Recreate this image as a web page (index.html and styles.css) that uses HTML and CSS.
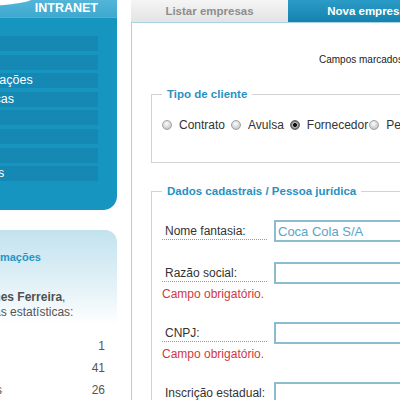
FILE: index.html
```html
<!DOCTYPE html>
<html lang="pt-BR">
<head>
<meta charset="utf-8">
<title>Nova empresa - Intranet</title>
<link rel="stylesheet" href="styles.css">
</head>
<body>
<div class="page">
  <aside class="side">
    <nav class="menu-panel">
      <div class="brand">INTRANET</div>
      <ul class="menu">
        <li>Início</li>
        <li>Agenda</li>
        <li>Comunicações</li>
        <li>Estatísticas</li>
        <li>Mural</li>
        <li>Notícias</li>
        <li>Perfil</li>
        <li>Contratos</li>
      </ul>
    </nav>
    <section class="info">
      <h3 class="info-title">Mais informações</h3>
      <p class="info-text">Olá, <b>Gomes Ferreira</b>,<br>observe as estatísticas:</p>
      <table class="stats">
        <tr><td>Logins</td><td class="num">1</td></tr>
        <tr><td>Avisos</td><td class="num">41</td></tr>
        <tr><td>Empresas</td><td class="num">26</td></tr>
      </table>
    </section>
  </aside>
  <main class="main">
    <div class="tabs">
      <a class="tab">Listar empresas</a>
      <a class="tab tab-active">Nova empresa</a>
    </div>
    <div class="box">
      <p class="note">Campos marcados com * são obrigatórios.</p>
      <fieldset class="group group-type">
        <legend>Tipo de cliente</legend>
        <div class="options">
          <label class="opt"><input type="radio" name="tipo">Contrato</label>
          <label class="opt"><input type="radio" name="tipo">Avulsa</label>
          <label class="opt"><input type="radio" name="tipo" checked>Fornecedor</label>
          <label class="opt opt-tight"><input type="radio" name="tipo">Pessoa física</label>
        </div>
      </fieldset>
      <fieldset class="group group-data">
        <legend>Dados cadastrais / Pessoa jurídica</legend>
        <div class="field">
          <div class="row"><span class="label">Nome fantasia:</span><input class="input" type="text" value="Coca Cola S/A"></div>
        </div>
        <div class="field">
          <div class="row"><span class="label">Razão social:</span><input class="input" type="text"></div>
          <div class="error">Campo obrigatório.</div>
        </div>
        <div class="field">
          <div class="row"><span class="label">CNPJ:</span><input class="input" type="text"></div>
          <div class="error">Campo obrigatório.</div>
        </div>
        <div class="field">
          <div class="row"><span class="label">Inscrição estadual:</span><input class="input" type="text"></div>
        </div>
      </fieldset>
    </div>
  </main>
</div>
</body>
</html>
```
FILE: styles.css
```css
html, body {
  margin: 0;
  padding: 0;
  overflow: hidden;
  background: #fff;
  font-family: "Liberation Sans", Arial, sans-serif;
}

.page {
  display: flex;
  align-items: flex-start;
  width: 780px;
  margin-left: -120px;
}

/* ---------- sidebar ---------- */
.side {
  width: 237px;
  flex: none;
}

.menu-panel {
  position: relative;
  overflow: hidden;
  height: 210px;
  background: #1795c1;
  border-bottom-right-radius: 14px;
}

.brand {
  height: 17px;
  line-height: 17px;
  padding-right: 19px;
  text-align: right;
  background: linear-gradient(#52b5d9, #3fa8cf);
  border-bottom: 1px solid #4db0d5;
  color: #fff;
  font-size: 12.5px;
  font-weight: bold;
}

.brand::before {
  content: "";
  position: absolute;
  left: 44px;
  top: -14px;
  width: 112px;
  height: 20px;
  border-radius: 50%;
  background: #fff;
}

.menu {
  list-style: none;
  margin: 18px 19px 0 0;
  padding: 0 0 0 40px;
}

.menu li {
  height: 15px;
  line-height: 15px;
  margin-bottom: 3.6px;
  padding-left: 30px;
  background: #1588b4;
  color: #fff;
  font-size: 12.5px;
  white-space: nowrap;
}

.info {
  margin-top: 20px;
  padding: 20px 12px 0 68px;
  height: 160px;
  background: linear-gradient(#c2e2ee, #e6f3f8 60px, #fff 95px);
  border-top-right-radius: 12px;
}

.info-title {
  margin: 0;
  font-size: 11px;
  line-height: 14px;
  font-weight: bold;
  color: #2596c6;
  white-space: nowrap;
}

.info-text {
  margin: 25.5px 0 0;
  font-size: 12px;
  line-height: 15px;
  color: #555;
  white-space: nowrap;
}

.info-text b {
  color: #505050;
}

.stats {
  width: 100%;
  margin-top: 15.5px;
  border-collapse: collapse;
  font-size: 12px;
  color: #555;
}

.stats td {
  height: 22px;
  padding: 0;
}

.stats .num {
  text-align: right;
}

/* ---------- main ---------- */
.main {
  width: 520px;
  flex: none;
  margin-left: 14px;
}

.tabs {
  display: flex;
}

.tab {
  width: 157px;
  height: 22px;
  line-height: 22px;
  text-align: center;
  font-size: 11.5px;
  font-weight: bold;
  color: #8e8e8e;
  background: linear-gradient(#f5f5f5, #e3e3e3);
}

.tab-active {
  color: #fff;
  background: linear-gradient(#2b9bc7, #1583ad);
}

.box {
  border: 1px solid #a9d3e2;
  padding: 31px 0 40px 19px;
}

.note {
  margin: 0 0 0 168px;
  font-size: 10px;
  line-height: 12px;
  color: #222;
  white-space: nowrap;
}

.group {
  margin: 21px 0 0;
  padding: 0 10px;
  border: 1px solid #d2d2d2;
}

.group legend {
  padding: 0 5px;
  font-size: 11.5px;
  line-height: 14px;
  font-weight: bold;
  color: #2a90c2;
}

.group-data {
  margin-top: 21px;
  padding-top: 22px;
}

.options {
  display: flex;
  align-items: center;
  padding: 15.5px 0 29.5px;
  font-size: 12px;
  line-height: 16px;
  color: #333;
  white-space: nowrap;
}

.opt {
  display: inline-flex;
  align-items: center;
  margin-right: 6px;
}

.opt-tight {
  margin-left: -5px;
}

.opt-tight input {
  margin-right: 2px;
}

.opt input {
  -webkit-appearance: none;
  appearance: none;
  width: 10px;
  height: 10px;
  margin: 0 7px 0 0;
  border-radius: 50%;
  border: 1px solid #a2a2a2;
  background: radial-gradient(circle at 45% 35%, #fdfdfd, #d2d2d2 60%, #ababab);
}

.opt input:checked {
  border-color: #5e5e5e;
  background: radial-gradient(circle, #111 0 1.6px, #bdbdbd 2.3px, #7c7c7c 3.6px, #555 100%);
}

.field {
  margin-bottom: 20px;
}

.row {
  display: flex;
  align-items: center;
}

.label {
  width: 102px;
  padding-left: 3px;
  border-bottom: 1px dotted #9a9a9a;
  font-size: 12px;
  line-height: 16px;
  color: #333;
  white-space: nowrap;
}

.input {
  width: 300px;
  height: 22px;
  box-sizing: border-box;
  margin: 0 0 0 7px;
  padding: 0 2px;
  border: 2px solid #8cbccd;
  font-family: "Liberation Sans", Arial, sans-serif;
  font-size: 13px;
  color: #5ba4c7;
}

.error {
  margin-top: 2px;
  font-size: 12px;
  line-height: 16px;
  color: #d3373f;
}
```
